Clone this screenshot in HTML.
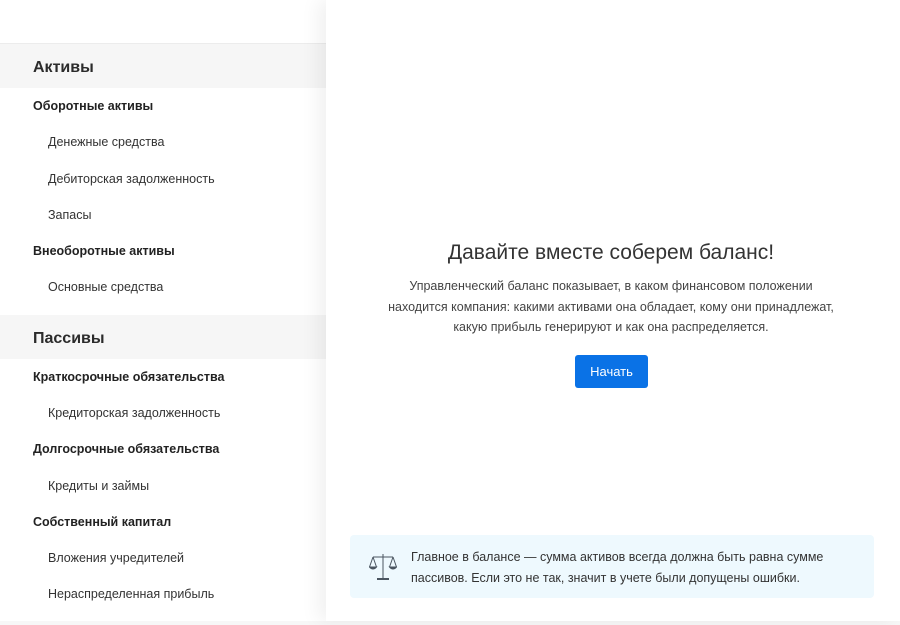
<!DOCTYPE html><html><head><meta charset="utf-8"><style>
*{margin:0;padding:0;box-sizing:border-box}
body{width:900px;height:625px;background:#f7f7f7;font-family:"Liberation Sans",sans-serif;color:#333;position:relative;overflow:hidden}
.side{position:absolute;left:0;top:0;width:326px;height:621px;background:#fff}
.topline{position:absolute;left:0;top:43px;width:326px;height:1px;background:#ececec}
.band{position:absolute;left:0;width:326px;height:44px;background:#f6f6f6;font-size:16px;font-weight:bold;padding-left:33px;line-height:47px;color:#2b2b2b}
.t{position:absolute;white-space:nowrap;font-size:12.5px;transform:translateY(-50%)}
.h{left:33px;font-weight:bold;color:#222}
.i{left:48px;color:#333}
.main{position:absolute;left:326px;top:0;width:574px;height:621px;background:#fff;box-shadow:-8px 0 18px rgba(0,0,0,.06)}
h1{position:absolute;left:0;width:570px;text-align:center;top:241px;font-weight:normal;font-size:21px;color:#333}
p.d{position:absolute;left:0;width:570px;text-align:center;top:276px;font-size:12.5px;line-height:20.5px;color:#444}
.btn{position:absolute;left:249px;top:355px;width:73px;height:33px;background:#0a72e6;border-radius:3px;color:#fff;font-size:13px;text-align:center;line-height:33px}
.info{position:absolute;left:24px;top:535px;width:524px;height:63px;background:#eef9fe;border-radius:4px}
.info p{position:absolute;left:61px;top:12px;font-size:12.5px;line-height:21px;color:#333}
</style></head><body>
<div class="side">
<div class="topline"></div>
<div class="band" style="top:44px">Активы</div>
<div class="t h" style="top:106px">Оборотные активы</div>
<div class="t i" style="top:142px">Денежные средства</div>
<div class="t i" style="top:179px">Дебиторская задолженность</div>
<div class="t i" style="top:215px">Запасы</div>
<div class="t h" style="top:251px">Внеоборотные активы</div>
<div class="t i" style="top:287px">Основные средства</div>
<div class="band" style="top:315px">Пассивы</div>
<div class="t h" style="top:377px">Краткосрочные обязательства</div>
<div class="t i" style="top:413px">Кредиторская задолженность</div>
<div class="t h" style="top:449px">Долгосрочные обязательства</div>
<div class="t i" style="top:486px">Кредиты и займы</div>
<div class="t h" style="top:522px">Собственный капитал</div>
<div class="t i" style="top:558px">Вложения учредителей</div>
<div class="t i" style="top:594px">Нераспределенная прибыль</div>
</div>
<div class="main">
<h1>Давайте вместе соберем баланс!</h1>
<p class="d">Управленческий баланс показывает, в каком финансовом положении<br>находится компания: какими активами она обладает, кому они принадлежат,<br>какую прибыль генерируют и как она распределяется.</p>
<div class="btn">Начать</div>
<div class="info">
<svg style="position:absolute;left:19px;top:17px" width="28" height="30" viewBox="0 0 28 30" fill="none" stroke="#4a5560" stroke-width="1">
<line x1="14" y1="2" x2="14" y2="26"/><line x1="4" y1="5" x2="24" y2="5"/>
<path d="M4 5 L0.5 15 M4 5 L7.5 15 M24 5 L20.5 15 M24 5 L27.5 15"/>
<path d="M0.5 15 Q4 19 7.5 15Z M20.5 15 Q24 19 27.5 15Z" fill="#4a5560"/>
<path d="M8 27 L20 27" stroke-width="2"/>
</svg>
<p>Главное в балансе — сумма активов всегда должна быть равна сумме<br>пассивов. Если это не так, значит в учете были допущены ошибки.</p>
</div>
</div>
</body></html>
